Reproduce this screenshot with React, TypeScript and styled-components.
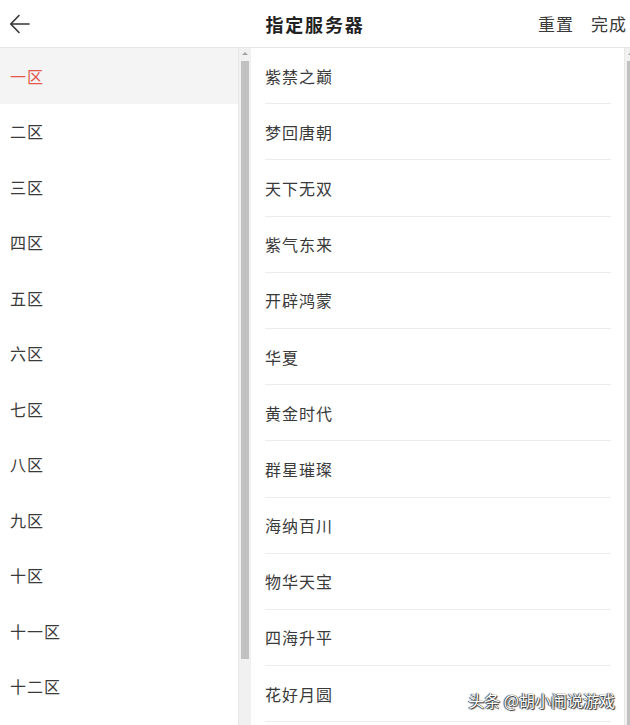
import styled, { createGlobalStyle } from "styled-components";

const zones = ["一区", "二区", "三区", "四区", "五区", "六区", "七区", "八区", "九区", "十区", "十一区", "十二区"];
const servers = ["紫禁之巅", "梦回唐朝", "天下无双", "紫气东来", "开辟鸿蒙", "华夏", "黄金时代", "群星璀璨", "海纳百川", "物华天宝", "四海升平", "花好月圆"];

const GlobalStyle = createGlobalStyle`
  html, body {
    margin: 0;
    padding: 0;
    background: #fff;
  }
  body {
    font-family: "Noto Sans CJK SC", "Noto Sans", sans-serif;
    color: #333;
  }
`;

function App() {
  return (
    <Page>
      <GlobalStyle />
      <Header>
        <BackBtn>
          <svg width="22" height="22" viewBox="0 0 22 22" fill="none" stroke="#333" strokeWidth="1.6" strokeLinecap="round" strokeLinejoin="round">
            <path d="M20 11H2" />
            <path d="M10 2.5L1.8 11L10 19.5" />
          </svg>
        </BackBtn>
        <Title>指定服务器</Title>
        <Actions>
          <Action>重置</Action>
          <Action>完成</Action>
        </Actions>
      </Header>
      <Body>
        <ZoneList>
          {zones.map((z, i) => (
            <ZoneItem key={z} $active={i === 0}>
              {z}
            </ZoneItem>
          ))}
        </ZoneList>
        <ScrollBar $thumbTop={13} $thumbHeight={598} />
        <ServerList>
          {servers.map((s) => (
            <ServerItem key={s}>{s}</ServerItem>
          ))}
        </ServerList>
        <ScrollBar $thumbTop={13} $thumbHeight={900} />
        <Watermark>头条 @胡小闹说游戏</Watermark>
      </Body>
    </Page>
  );
}

export default App;

const Page = styled.div`
  width: 630px;
  height: 725px;
  overflow: hidden;
  background: #fff;
`;

const Header = styled.div`
  position: relative;
  display: flex;
  align-items: center;
  justify-content: space-between;
  height: 48px;
  border-bottom: 1px solid #e6e6e6;
  box-sizing: border-box;
`;

const BackBtn = styled.div`
  display: flex;
  align-items: center;
  padding-left: 9px;
  width: 40px;
`;

const Title = styled.h1`
  position: absolute;
  left: 0;
  right: 0;
  margin: 0;
  text-align: center;
  font-size: 18px;
  font-weight: 700;
  letter-spacing: 1.8px;
  color: #222;
  pointer-events: none;
`;

const Actions = styled.div`
  display: flex;
  gap: 17px;
  margin-right: 3px;
`;

const Action = styled.span`
  font-size: 17px;
  letter-spacing: 1px;
  color: #3a3a3a;
`;

const Body = styled.div`
  position: relative;
  display: flex;
  height: 677px;
  overflow: hidden;
`;

const ZoneList = styled.ul`
  list-style: none;
  margin: 0;
  padding: 0;
  width: 238px;
  flex: none;
`;

const ZoneItem = styled.li<{ $active: boolean }>`
  display: flex;
  align-items: center;
  height: 55.5px;
  padding-left: 10px;
  font-size: 16px;
  letter-spacing: 1px;
  color: ${({ $active }) => ($active ? "#e2574c" : "#3a3a3a")};
  background: ${({ $active }) => ($active ? "#f4f4f4" : "#fff")};
`;

const ScrollBar = styled.div<{ $thumbTop: number; $thumbHeight: number }>`
  position: relative;
  width: 13px;
  flex: none;
  background: #f1f1f1;
  border-left: 1px solid #e8e8e8;
  box-sizing: border-box;

  &::before {
    content: "";
    position: absolute;
    top: 4px;
    left: 3px;
    border-left: 3px solid transparent;
    border-right: 3px solid transparent;
    border-bottom: 3px solid #a3a3a3;
  }

  &::after {
    content: "";
    position: absolute;
    top: ${({ $thumbTop }) => $thumbTop}px;
    left: 2px;
    width: 8px;
    height: ${({ $thumbHeight }) => $thumbHeight}px;
    background: #c1c1c1;
  }
`;

const ServerList = styled.ul`
  list-style: none;
  margin: 0 0 0 2px;
  padding: 0 13px 0 12px;
  width: 371px;
  flex: none;
  box-sizing: border-box;
`;

const ServerItem = styled.li`
  display: flex;
  align-items: center;
  height: 56.2px;
  box-sizing: border-box;
  border-bottom: 1px solid #ececec;
  font-size: 16px;
  letter-spacing: 1px;
  color: #3a3a3a;
`;

const Watermark = styled.div`
  position: absolute;
  right: 15px;
  bottom: 13px;
  font-size: 16px;
  color: #fff;
  text-shadow: 0 0 1px #000, 1px 1px 1px #333, -1px 0 1px #555;
`;
